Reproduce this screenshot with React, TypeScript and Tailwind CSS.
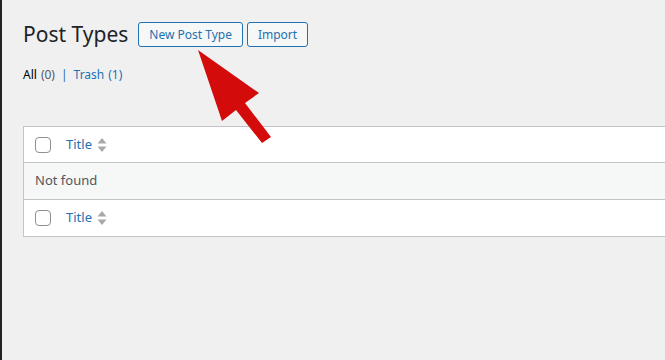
import React from 'react';

const font = 'font-["Noto_Sans","Open_Sans",sans-serif]';

const SortIcon = () => (
    <svg width="10" height="16" viewBox="0 0 10 16" className="ml-[5px]">
        <path d="M5 1 L9.5 6.5 H0.5 Z" fill="#a7aaad" />
        <path d="M5 15 L9.5 9.5 H0.5 Z" fill="#a7aaad" />
    </svg>
);

const Checkbox = () => (
    <span className="block w-4 h-4 rounded-[4px] border border-[#8c8f94] bg-white" />
);

const TitleRow = ({ h }: { h: string }) => (
    <div className={`${h} flex items-center bg-white pl-[11px]`}>
        <Checkbox />
        <span className="ml-[15px] text-[13px] text-[#2271b1]">Title</span>
        <SortIcon />
    </div>
);

export default function App() {
    return (
        <div className={`relative w-[665px] h-[360px] overflow-hidden bg-[#f0f0f1] flex ${font}`}>
            {/* admin menu edge */}
            <div className="w-[2px] bg-[#1d2327] shrink-0" />

            <div className="flex-1 pl-[21px]">
                {/* Heading + actions */}
                <div className="mt-[22px] h-[25px] flex items-center">
                    <h1 className="text-[21px] leading-[25px] text-[#1d2327] font-normal mr-[10px]">Post Types</h1>
                    <button className="h-[25px] px-[10px] text-[12px] text-[#2271b1] bg-[#f6f7f7] border border-[#2271b1] rounded-[3px] leading-none">
                        New Post Type
                    </button>
                    <button className="ml-[4px] h-[25px] px-[10px] text-[12px] text-[#2271b1] bg-[#f6f7f7] border border-[#2271b1] rounded-[3px] leading-none">
                        Import
                    </button>
                </div>

                {/* Status filter */}
                <div className="mt-[19px] text-[12px] leading-[18px] flex items-center">
                    <span className="text-[#000]">All</span>
                    <span className="ml-[4px] text-[#50575e]">(0)</span>
                    <span className="mx-[6px] text-[#2271b1]">|</span>
                    <span className="text-[#2271b1]">Trash</span>
                    <span className="ml-[4px] text-[#2271b1]">(1)</span>
                </div>

                {/* List table */}
                <div className="mt-[42px] w-[720px] border border-[#c3c4c7]">
                    <TitleRow h="h-[35px]" />
                    <div className="h-[37px] flex items-center pl-[11px] bg-[#f6f7f7] border-t border-[#c3c4c7] text-[13px] text-[#50575e]">
                        Not found
                    </div>
                    <div className="border-t border-[#c3c4c7]">
                        <TitleRow h="h-[36px]" />
                    </div>
                </div>
            </div>

            {/* annotation arrow */}
            <svg className="absolute left-0 top-0 pointer-events-none" width="665" height="360">
                <polygon
                    points="198,50 259,93 245,103 271,137 262,143 236,110 222,121"
                    fill="#d40b0b"
                />
            </svg>
        </div>
    );
}
